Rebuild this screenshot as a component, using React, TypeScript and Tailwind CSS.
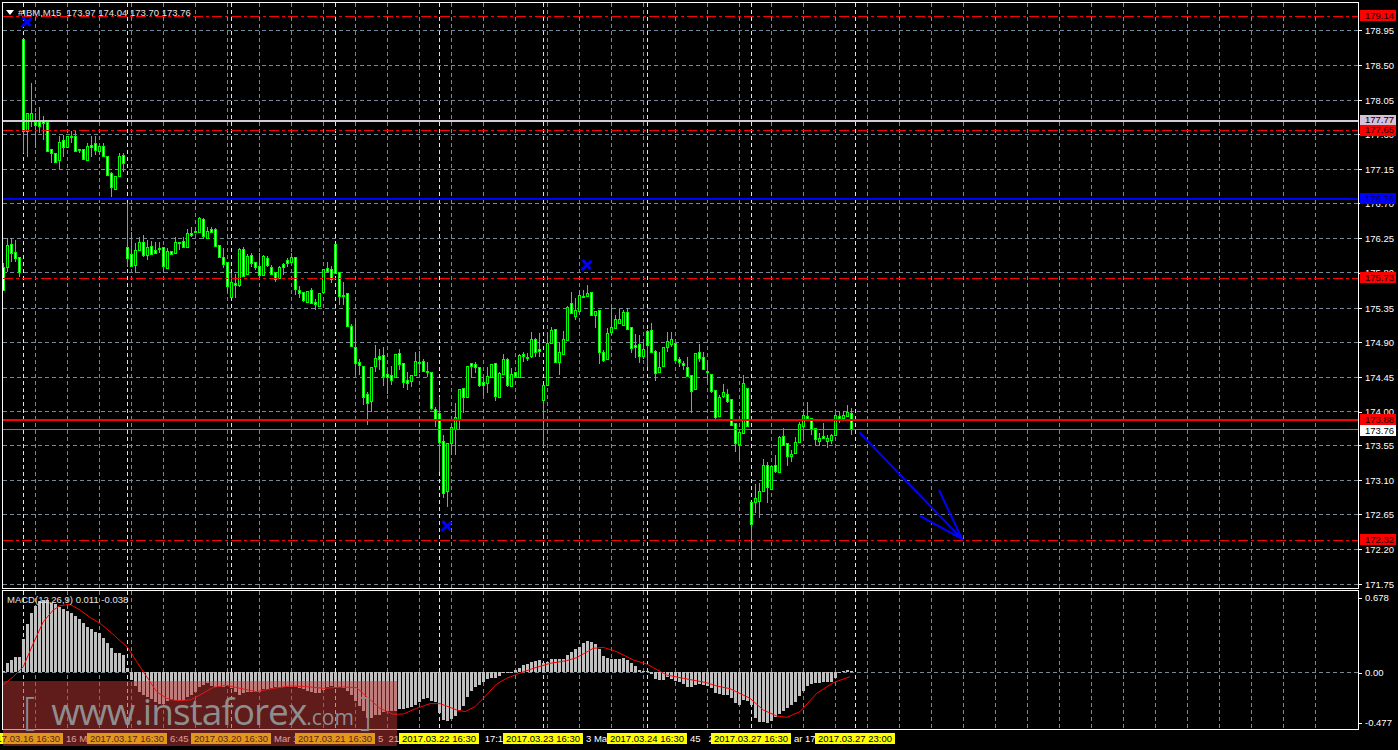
const GREEN = "#00ff00"
const GRID = "#778899"
const YELLOW = "#ffff00"

// [high, top, bottom, low, white body] read off the chart, first block is 3x page y
const candlesA = [
  [790,800,868,868,1],[715,735,800,815,0],[715,733,760,785,1],[720,757,775,785,1],[772,772,818,830,1],
  [118,118,393,460,1],[340,340,393,470,0],[250,340,365,380,0],[340,365,375,445,1],[322,367,378,400,1],
  [348,362,368,420,1],[365,365,452,452,1],[448,448,460,488,1],[458,458,485,488,1],[408,427,480,508,0],
  [405,420,440,470,1],[408,408,440,445,0],[392,408,412,430,1],[390,408,452,455,1],[448,448,452,460,1],
  [448,448,478,480,1],[428,438,480,482,0],[408,435,442,470,1],[408,430,452,465,1],[437,437,452,465,0],
  [430,438,468,470,1],[468,468,525,525,1],[515,520,562,590,1],[528,528,568,570,0],[460,468,527,530,0],
  [458,465,488,515,1],[610,740,772,800,1],[695,762,797,800,1],[730,750,795,818,0],[710,727,750,752,0],
  [705,727,765,770,1],[720,740,765,780,0],[722,737,760,765,1],[725,750,758,760,1],[725,745,748,760,1],
  [742,742,800,820,1],[745,752,802,805,0],[752,752,760,762,1],[712,725,758,760,0],[725,727,730,750,1],
  [712,723,740,745,1],[688,700,742,745,0],[680,698,705,710,1],[680,694,698,700,1],[650,655,698,700,0],
  [655,658,710,718,1],[680,694,716,718,0],[680,688,698,700,1],[685,688,738,740,1],[735,735,770,770,1],
  [745,770,790,805,1],[787,787,858,880,1],[820,845,890,895,0],[822,848,853,895,1],[745,748,855,860,0],
  [740,748,828,830,1],[762,768,822,825,0],[758,766,790,800,1],[786,786,800,810,1],[760,798,826,835,1],
  [765,768,824,825,0],[768,775,796,800,1],[795,800,820,825,1],[815,815,835,845,1],[798,800,832,835,0],
  [790,792,800,825,1],[775,780,790,800,1],[760,770,785,788,0],[772,772,868,885,1],[858,870,878,895,1],
  [875,875,900,906,1],[872,872,905,908,0],[864,870,910,912,1],[897,905,910,930,1],[878,880,918,920,0],
  [808,808,878,880,0],[785,805,815,820,1],
]
const candlesB = [
  [108,118,148,158,1],[42,42,128,128,1],[127,127,200,225,1],[155,195,199,225,1],[190,190,288,290,1],
  [282,288,347,347,1],[270,352,400,435,1],[388,397,407,435,1],[408,408,500,525,1],[485,492,518,585,1],
  [412,412,515,545,0],[345,385,410,425,0],[358,378,388,420,1],[350,376,438,468,1],[415,433,443,492,1],
  [408,436,452,465,1],[372,372,442,445,0],[358,370,403,420,1],[400,400,458,475,1],[425,450,458,480,1],
  [436,436,455,470,0],[365,394,435,435,0],[362,396,398,430,1],[388,393,422,425,1],[395,424,426,440,1],
  [427,427,535,540,1],[530,538,572,590,1],[500,550,638,725,1],[615,632,788,805,1],[640,640,785,830,0],
  [590,590,638,675,0],[520,562,598,675,0],[478,478,568,598,0],[475,475,503,548,1],[408,408,500,505,0],
  [400,400,408,445,1],[395,402,410,430,1],[412,412,467,470,1],[440,457,465,498,1],[410,438,458,490,0],
  [403,403,442,445,0],[400,400,500,512,1],[425,430,502,505,0],[372,388,434,435,0],[383,388,467,470,1],
  [415,431,467,468,0],[425,427,440,440,1],[372,376,442,445,0],[365,373,380,395,1],[368,381,383,392,1],
  [305,328,380,385,0],[325,328,368,380,1],[310,358,365,380,1],[466,466,512,650,0],[310,340,465,465,0],
  [290,300,338,340,0],[298,298,398,400,1],[340,367,398,435,0],[302,328,372,375,0],[228,230,330,332,0],
  [185,218,248,250,1],[205,241,258,270,0],[182,196,245,248,0],[180,199,201,205,1],[165,190,200,200,0],
  [187,187,255,255,1],[244,244,257,295,0],[240,240,365,402,1],[360,367,390,395,1],[295,310,388,390,0],
  [235,292,308,315,0],[255,268,295,298,0],[238,268,280,282,0],[240,245,285,288,0],[235,247,298,300,1],
]
const candlesC = [
  [82,82,145,158,1],[102,135,142,175,1],[105,133,168,190,1],[125,148,170,178,0],[90,93,135,200,1],
  [70,90,157,160,1],[150,153,218,242,1],[155,202,218,220,0],[142,142,200,200,0],[97,122,140,155,0],
  [96,118,132,142,0],[128,128,178,180,1],[172,178,188,200,1],[182,190,197,210,1],[172,200,228,230,1],
  [226,226,275,338,1],[160,160,268,270,0],[133,155,172,185,1],[155,170,205,208,1],[185,213,217,250,1],
  [223,223,275,278,1],[271,271,353,356,1],[285,292,350,352,0],[252,277,288,295,0],[268,283,305,310,1],
  [298,298,376,378,1],[370,370,431,455,1],[397,397,433,482,0],[225,250,400,402,0],[265,265,380,382,1],
  [605,605,670,780,1],[552,595,607,640,0],[548,574,605,655,0],[477,496,575,575,0],[486,496,563,608,1],
  [498,498,566,568,0],[465,496,515,518,1],[408,412,517,518,0],[384,408,436,438,1],[428,428,467,497,1],
  [450,463,470,487,0],[410,427,461,463,0],[367,373,428,430,0],[328,344,376,410,0],[305,348,354,358,1],
  [354,354,388,405,1],[384,384,418,435,1],[400,415,425,438,0],[370,408,413,418,1],[405,415,425,445,0],
  [402,406,422,432,0],[340,346,407,408,0],[335,349,356,368,1],[332,346,356,360,0],[315,336,348,350,0],
  [325,340,388,405,1],
]
const toPage = (list: number[][], base: number) =>
  list.map(([h, t, b, l, w]) => ({ h: base + h / 3, t: base + t / 3, b: base + b / 3, l: base + l / 3, w }))
const candles = [...toPage(candlesA, 0), ...toPage(candlesB, 230), ...toPage(candlesC, 300)]

// histogram ends in 3x px, zero line sits at 275 (page y 580 + v / 3)
const macd = [
  272,250,240,232,232,178,132,100,78,62,60,60,68,72,80,88,92,98,108,118,128,140,146,155,158,175,190,205,218,220,225,265,
  300,318,335,345,350,358,365,372,372,362,360,360,362,360,352,345,335,322,315,310,318,322,322,320,318,325,335,345,340,335,
  335,335,335,328,326,325,322,322,322,322,322,322,325,328,332,336,340,338,330,322,318,322,322,325,333,345,362,378,392,415,
  415,405,405,395,392,392,392,388,388,385,382,376,365,357,355,362,365,398,420,422,
  417,408,390,378,352,333,320,315,305,298,293,293,288,280,280,278,270,263,255,252,245,242,240,250,245,237,238,238,236,226,
  216,208,200,190,183,186,192,208,228,234,236,236,237,233,240,248,258,270,272,274,282,296,300,300,290,296,303,307,312,320,
  322,315,313,315,317,325,338,342,344,345,355,368,376,360,362,375,415,426,426,430,422,410,402,392,385,376,365,348,332,318,
  312,310,308,306,306,305,295,280,273,270,273,
]
const signal = [
  ...[[10,314],[40,290],[70,260],[100,190],[130,125],[160,90],[180,77],[210,73],[240,90],[270,112],[300,130],[330,155],[360,182],[385,205],[410,245],[440,290],[470,335],[500,355],[530,362],[570,360],[600,345],[640,322],[680,316],[720,325],[770,335],[820,325],[870,318],[920,320],[970,325],[1030,321],[1070,323],[1100,350],[1140,385],[1180,403],[1210,402],[1250,385],[1290,371],[1320,371]].map(([x, y]) => [x / 3, 580 + y / 3]),
  ...[[0,382],[20,390],[45,395],[75,380],[100,355],[140,312],[170,295],[200,283],[250,265],[300,250],[350,242],[380,233],[430,205],[460,202],[500,215],[550,240],[590,252],[650,285],[700,295],[770,308],[800,318],[840,326],[900,355],[940,390],[980,408],[1010,412],[1050,395],[1100,340],[1150,308],[1200,290]].map(([x, y]) => [450 + x / 3, 580 + y / 3]),
]

const priceTicks = [
  ["178.95", 30], ["178.50", 65], ["178.05", 100], ["177.60", 134], ["177.15", 169], ["176.70", 203],
  ["176.25", 238], ["175.80", 272.5], ["175.35", 308], ["174.90", 342], ["174.45", 377], ["174.00", 411.5],
  ["173.55", 445], ["173.10", 480], ["172.65", 514], ["172.20", 549], ["171.75", 584],
] as const
const priceTags = [
  { v: "179.14", y: 15.5, cls: "bg-[#ff0000] text-[#200000]" },
  { v: "177.77", y: 120, cls: "bg-[#d8bfd8] text-black" },
  { v: "177.65", y: 130, cls: "bg-[#ff0000] text-[#200000]" },
  { v: "176.76", y: 198.5, cls: "bg-[#0000ff] text-[#000050]" },
  { v: "175.73", y: 277.5, cls: "bg-[#ff0000] text-[#200000]" },
  { v: "173.88", y: 419.5, cls: "bg-[#ff0000] text-[#200000]" },
  { v: "173.76", y: 430.5, cls: "bg-white text-black" },
  { v: "172.32", y: 539.5, cls: "bg-[#ff0000] text-[#200000]" },
]
const gridX = Array.from({ length: 41 }, (_, k) => 35.5 + 32 * k)
const yellowX = Array.from({ length: 9 }, (_, k) => 23.5 + 104 * k)

const timeRow = [
  ["2017.03.16 16:30", "16 M"], ["2017.03.17 16:30", "6:45"], ["2017.03.20 16:30", "Mar 1"],
  ["2017.03.21 16:30", "5  21"], ["2017.03.22 16:30", " 17:15"], ["2017.03.23 16:30", "3 Mar"],
  ["2017.03.24 16:30", "45   2"], ["2017.03.27 16:30", "ar 17:"], ["2017.03.27 23:00", ""],
]

function Cross({ x, y }: { x: number; y: number }) {
  return (
    <path
      d={`M${x - 4} ${y - 5}L${x + 4} ${y + 4}M${x + 5} ${y - 4}L${x - 5} ${y + 5}`}
      stroke="#0000ff"
      strokeWidth={3}
      fill="none"
    />
  )
}

function Candles() {
  return (
    <g shapeRendering="crispEdges">
      {candles.map((c, i) => {
        const cx = 3.5 + 4 * i
        return (
          <g key={i}>
            <line x1={cx} x2={cx} y1={Math.round(c.h)} y2={Math.round(c.l)} stroke={GREEN} />
            <rect
              x={cx - 1}
              y={Math.round(c.t) + 0.5}
              width={2}
              height={Math.max(1, Math.round(c.b - c.t))}
              fill={c.w ? "#ffffff" : "#000000"}
              stroke={GREEN}
            />
          </g>
        )
      })}
    </g>
  )
}

function VerticalGrid({ y1, y2 }: { y1: number; y2: number }) {
  return (
    <g shapeRendering="crispEdges">
      {gridX.map((x) => (
        <line key={x} x1={x} x2={x} y1={y1} y2={y2} stroke={GRID} strokeDasharray="4 3" />
      ))}
      {yellowX.map((x) => (
        <line key={x} x1={x} x2={x} y1={y1} y2={y2} stroke={YELLOW} strokeDasharray="4 3" />
      ))}
    </g>
  )
}

function PriceChart() {
  return (
    <svg className="block w-full h-full" viewBox="3 3 1355 585">
      <g shapeRendering="crispEdges">
        {priceTicks.map(([v, y]) => (
          <line key={v} x1={3} x2={1358} y1={Math.floor(y) + 0.5} y2={Math.floor(y) + 0.5} stroke={GRID} strokeDasharray="4 3" />
        ))}
      </g>
      <VerticalGrid y1={3} y2={588} />
      <Candles />
      <g shapeRendering="crispEdges">
        {[16.5, 130.5, 278.5, 540.5].map((y) => (
          <line key={y} x1={3} x2={1358} y1={y} y2={y} stroke="#ff0000" strokeDasharray="10 3 3 3" />
        ))}
        <rect x={3} y={120} width={1355} height={2} fill="#d8c8d8" />
        <rect x={3} y={198} width={1355} height={2} fill="#0000ff" />
        <rect x={3} y={419} width={1355} height={2} fill="#ff0000" />
        <line x1={3} x2={1358} y1={429.5} y2={429.5} stroke="#778088" />
      </g>
      <Cross x={26.5} y={22} />
      <Cross x={586.5} y={265} />
      <Cross x={446.5} y={526} />
      <path d="M859.5 432.5L962 539M939 490L962 539L920 516" stroke="#0000ff" strokeWidth={2} fill="none" />
    </svg>
  )
}

function MacdChart() {
  return (
    <svg className="block w-full h-full" viewBox="3 591 1355 138">
      <line x1={3} x2={1358} y1={672.5} y2={672.5} stroke={GRID} strokeDasharray="4 3" shapeRendering="crispEdges" />
      <VerticalGrid y1={591} y2={729} />
      <g shapeRendering="crispEdges">
        {macd.map((v, i) => {
          const end = 580 + v / 3
          return (
            <rect
              key={i}
              x={2 + 4 * i}
              y={Math.round(Math.min(end, 672))}
              width={3}
              height={Math.max(1, Math.round(Math.abs(end - 672)))}
              fill="#c0c0c0"
            />
          )
        })}
      </g>
      <polyline points={signal.map((p) => p.join(",")).join(" ")} fill="none" stroke="#ff0000" strokeWidth={1} />
    </svg>
  )
}

export default function App() {
  return (
    <div className="relative w-[1398px] h-[750px] overflow-hidden bg-black text-white text-[9.5px] leading-none font-['Liberation_Sans',sans-serif]">
      {/* price pane */}
      <div className="flex h-[587px] mt-[2px] ml-[2px]">
        <div className="relative w-[1357px] border border-white">
          <PriceChart />
          <div className="absolute left-[3px] top-[5px] flex items-center gap-[4px] whitespace-pre text-[#e4e4e4]">
            <svg width="8" height="5" viewBox="0 0 8 5">
              <path d="M0 0H8L4 5Z" fill="#ffffff" />
            </svg>
            <span>#IBM,M15  173.97 174.04 173.70 173.76</span>
          </div>
        </div>
        <div className="relative w-[39px]">
          {priceTicks.map(([v, y]) => (
            <div key={v} className="absolute left-0 flex items-center gap-[3px] h-[10px]" style={{ top: y - 6.5 }}>
              <span className="w-[3px] h-px bg-white" />
              <span>{v}</span>
            </div>
          ))}
          {priceTags.map((t) => (
            <div
              key={t.v}
              className={`absolute left-[1px] w-[36px] h-[11px] flex items-center pl-[5px] ${t.cls}`}
              style={{ top: t.y - 7.5 }}
            >
              {t.v}
            </div>
          ))}
        </div>
      </div>

      {/* macd pane */}
      <div className="flex h-[140px] mt-px ml-[2px]">
        <div className="relative w-[1357px] border border-white">
          <MacdChart />
          <div className="absolute left-[4px] top-[4px] text-[#e4e4e4]">MACD(12,26,9) 0.011 -0.038</div>
        </div>
        <div className="relative w-[39px]">
          <div className="absolute left-0 top-[3px] flex items-center gap-[3px] h-[10px]">
            <span className="w-[3px] h-px bg-white" />
            <span>0.678</span>
          </div>
          <div className="absolute left-0 top-[78px] flex items-center gap-[3px] h-[10px]">
            <span className="w-[3px] h-px bg-white" />
            <span>0.00</span>
          </div>
          <div className="absolute left-0 top-[128px] flex items-center gap-[3px] h-[10px]">
            <span className="w-[3px] h-px bg-white" />
            <span>-0.477</span>
          </div>
        </div>
      </div>

      {/* time axis */}
      <div className="flex mt-[3px] ml-[-17px] h-[11px] whitespace-pre">
        {timeRow.map(([stamp, rest]) => (
          <div key={stamp} className="flex shrink-0">
            <div className="w-[80px] h-[11px] pt-px bg-[#ffff00] text-black flex items-center justify-center">{stamp}</div>
            <div className="w-[24px] h-[11px] pt-px overflow-hidden flex items-center pl-[3px]">{rest}</div>
          </div>
        ))}
      </div>

      {/* watermark */}
      <div className="absolute left-[3px] top-[681px] w-[394px] h-[65px] bg-[#c03535]/50">
        <div className="flex items-baseline pl-[20px] pt-[10px] text-[#8e8e8e] font-['Open_Sans',sans-serif] font-normal leading-none whitespace-pre">
          <span className="text-[38px] font-light">[</span>
          <span className="ml-[16px] text-[37px] tracking-[-1px]">www.instaforex</span>
          <span className="text-[21px]">.com</span>
          <span className="ml-[6px] text-[38px] font-light">]</span>
        </div>
      </div>
    </div>
  )
}
